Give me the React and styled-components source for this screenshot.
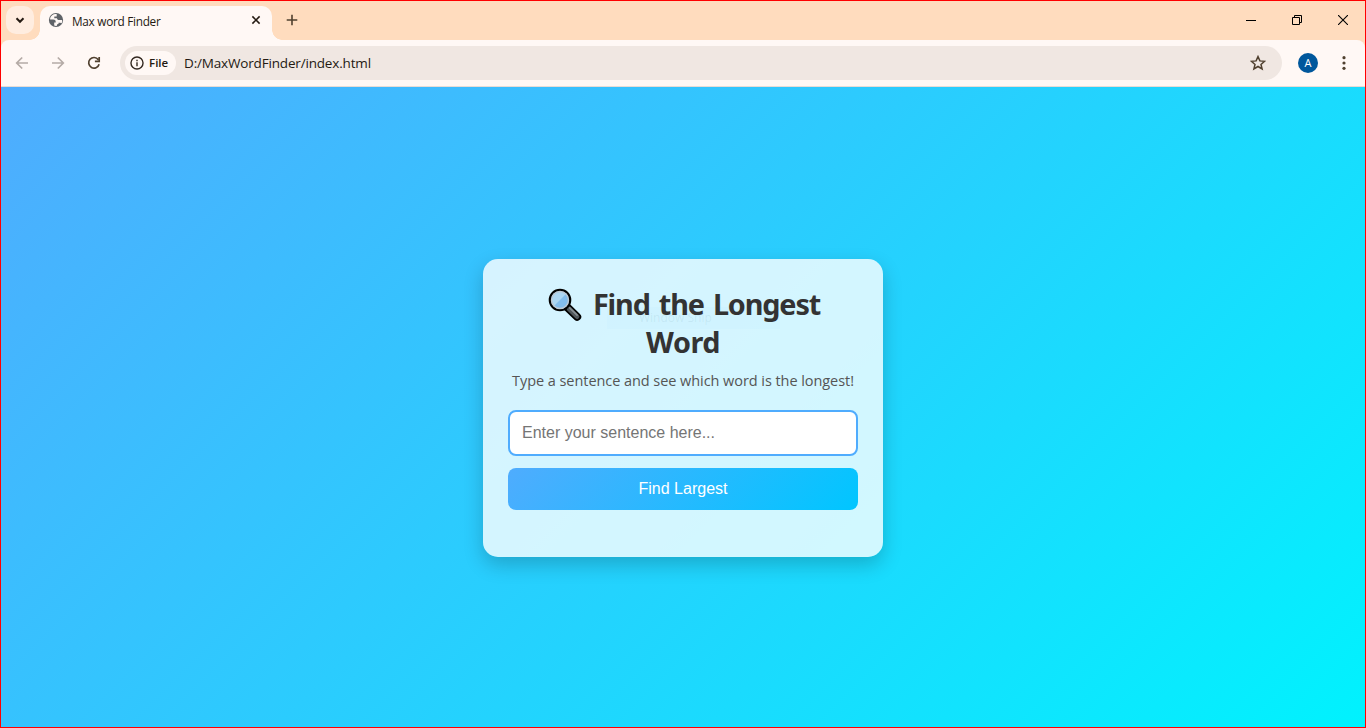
import React from 'react';
import styled, { createGlobalStyle } from 'styled-components';

const GlobalStyle = createGlobalStyle`
  * { box-sizing: border-box; }
  body { margin: 0; overflow: hidden; font-family: "Open Sans", "Noto Sans", sans-serif; }
`;

const Window = styled.div`
  width: 1366px;
  height: 728px;
  display: flex;
  flex-direction: column;
  border: 1px solid #ff0000;
  background: #ffdcbe;
`;

const TabStrip = styled.div`
  height: 39px;
  flex: none;
  display: flex;
  padding: 5px 0 0 5px;
`;

const TabSearch = styled.div`
  width: 28px;
  height: 28px;
  border-radius: 10px;
  background: #ffede0;
  display: flex;
  align-items: center;
  justify-content: center;
`;

const Tab = styled.div`
  position: relative;
  width: 232px;
  height: 34px;
  margin-left: 6px;
  padding: 0 11px 6px 8px;
  display: flex;
  align-items: center;
  border-radius: 10px 10px 0 0;
  background: #fff8f5;
  &::before, &::after {
    content: "";
    position: absolute;
    bottom: 0;
    width: 10px;
    height: 10px;
  }
  &::before { left: -10px; background: radial-gradient(circle at 0 0, transparent 9.5px, #fff8f5 10px); }
  &::after { right: -10px; background: radial-gradient(circle at 100% 0, transparent 9.5px, #fff8f5 10px); }
`;

const Label = styled.span`
  white-space: nowrap;
  color: ${(p) => p.$color || '#241a12'};
  font-size: ${(p) => p.$size}px;
  font-weight: ${(p) => p.$weight || 400};
  letter-spacing: ${(p) => p.$spacing || 0}px;
  line-height: 18px;
`;

const TabTitle = styled(Label)`
  flex: 1;
  margin-left: 8px;
  padding-top: 1px;
`;

const NewTab = styled.div`
  width: 28px;
  height: 28px;
  margin-left: 6px;
  display: flex;
  align-items: center;
  justify-content: center;
`;

const WindowControls = styled.div`
  display: flex;
  margin: -5px -1px 0 auto;
  height: 38px;
`;

const Control = styled.div`
  width: 46px;
  display: flex;
  align-items: center;
  justify-content: center;
`;

const Toolbar = styled.div`
  height: 47px;
  flex: none;
  display: flex;
  align-items: center;
  padding: 0 13px 1px;
  border-bottom: 1px solid #e8dcd5;
  border-radius: 8px 8px 0 0;
  background: #fff8f5;
`;

const NavButton = styled.div`
  width: 16px;
  height: 16px;
  margin-right: 20px;
  display: flex;
`;

const AddressBar = styled.div`
  width: 1162px;
  height: 34px;
  margin-left: -2px;
  padding: 0 16px 0 5px;
  display: flex;
  align-items: center;
  border-radius: 17px;
  background: #f0e7e2;
`;

const FileChip = styled.div`
  width: 51px;
  height: 24px;
  padding-left: 5px;
  display: flex;
  align-items: center;
  gap: 5px;
  border-radius: 12px;
  background: #fff8f5;
`;

const Url = styled(Label)`
  flex: 1;
  margin-left: 8px;
`;

const Avatar = styled.div`
  width: 20px;
  height: 20px;
  margin: 0 18px 0 16px;
  display: flex;
  align-items: center;
  justify-content: center;
  border-radius: 50%;
  background: #00579c;
`;

const Page = styled.main`
  flex: 1;
  display: flex;
  align-items: center;
  justify-content: center;
  padding-top: 1px;
  background: linear-gradient(135deg, #4facfe, #00f2fe);
`;

const Card = styled.section`
  position: relative;
  width: 400px;
  height: 298px;
  padding: 26px 25px 24px;
  border-radius: 15px;
  background: rgba(255, 255, 255, 0.8);
  box-shadow: 0 8px 20px rgba(0, 0, 0, 0.2);
  text-align: center;
`;

const Title = styled.h1`
  position: relative;
  margin: 0 0 9px;
  color: #333;
  font-family: "Noto Sans", "Open Sans", sans-serif;
  font-size: 28.8px;
  font-weight: 700;
  line-height: 38px;
  letter-spacing: -0.5px;
  svg { vertical-align: -7px; margin: 0 11px 0 2px; }
`;

const TitleLead = styled.span`
  letter-spacing: -1.15px;
  word-spacing: 2.8px;
`;

const Subtitle = styled.p`
  margin: 0 0 19px;
  color: #555;
  font-size: 14.5px;
  letter-spacing: -0.06px;
  line-height: 21px;
  white-space: nowrap;
`;

const SentenceInput = styled.input`
  display: block;
  width: 100%;
  height: 46px;
  padding: 12px;
  border: 2px solid #4facfe;
  border-radius: 8px;
  outline: none;
  background: #fff;
  font: 16px "Liberation Sans", sans-serif;
  &::placeholder { color: #757575; }
`;

const FindButton = styled.button`
  display: block;
  width: 100%;
  height: 42px;
  margin-top: 12px;
  border: 0;
  border-radius: 8px;
  background: linear-gradient(135deg, #4facfe, #00c6ff);
  color: #fff;
  font: 16px "Liberation Sans", sans-serif;
`;

const SnipHint = styled.div`
  position: absolute;
  left: 124px;
  top: 48px;
  width: 173px;
  height: 22px;
  display: flex;
  align-items: center;
  padding-left: 32px;
  background: rgba(195, 238, 255, 0.22);
  color: rgba(70, 120, 140, 0.1);
  font-size: 12px;
`;

const Globe = () => (
  <svg width="16" height="16" viewBox="0 0 16 16">
    <circle cx="8" cy="8" r="7.1" fill="#5f6368" />
    <path d="M8.7 2.1C5.8 1.5 2.9 3.3 2.2 6.1l-.1 1.4h3.1c1.7 0 2.5.9 2.5 2.2v.8H6.2v3.1c.8.3 1.9.4 2.8.2v-1.5c1.3 0 1.6-.6 1.6-1.6h1.5c.7 0 1.2.2 1.5.5.5-.9.7-2.1.5-3.2H11c-1.2 0-2-.7-2-1.8H6.3V4.5h2.4z" fill="#fff8f5" />
  </svg>
);

const Glyph = ({ size = 16, color = '#50402f', width = 1.7, d, children }) => (
  <svg width={size} height={size} viewBox="0 0 16 16" fill="none" stroke={color} strokeWidth={width}>
    {d && <path d={d} />}
    {children}
  </svg>
);

const Magnifier = () => (
  <svg width="34" height="34" viewBox="0 0 34 34">
    <path d="M19.5 19.5l9.7 9.3" stroke="#000" strokeWidth="8" strokeLinecap="round" />
    <path d="M17 17l5 5" stroke="#000" strokeWidth="4.5" />
    <path d="M18 18l4 4" stroke="#999fa3" strokeWidth="2" />
    <path d="M21 20.8l8 7.8" stroke="#50575b" strokeWidth="4.8" strokeLinecap="round" />
    <path d="M21.6 19.8l7.5 7.3" stroke="#858c90" strokeWidth="1.7" strokeLinecap="round" />
    <circle cx="12" cy="12" r="10.2" fill="#83bdec" stroke="#000" strokeWidth="2.2" />
    <path d="M5.8 18.2A8.8 8.8 0 0 1 18.2 5.8z" fill="#acd6f2" />
    <circle cx="12" cy="12" r="8.5" fill="none" stroke="#bec8d2" strokeWidth="1.4" />
  </svg>
);

export default function App() {
  return (
    <>
      <GlobalStyle />
      <Window>
        <TabStrip>
          <TabSearch><Glyph color="#241a12" width={2} d="M4.5 6.3L8 9.8l3.5-3.5" /></TabSearch>
          <Tab>
            <Globe />
            <TabTitle $size={11.8} $spacing={-0.28}>Max word Finder</TabTitle>
            <Glyph size={10} color="#241a12" width={2.5} d="M2.2 2.2l11.6 11.6M13.8 2.2L2.2 13.8" />
          </Tab>
          <NewTab><Glyph width={1.6} d="M8 2.7v10.6M2.7 8h10.6" /></NewTab>
          <WindowControls>
            <Control>
              <svg width="10" height="10" shapeRendering="crispEdges"><path d="M0 5.5h10" stroke="#000" /></svg>
            </Control>
            <Control>
              <svg width="10" height="10" fill="none" stroke="#000"><path d="M.5 2.5h7v7h-7zM2.5 2.5v-2h7v7h-2" /></svg>
            </Control>
            <Control>
              <svg width="10" height="10" stroke="#000" strokeWidth="1.1"><path d="M0 0l10 10M10 0L0 10" /></svg>
            </Control>
          </WindowControls>
        </TabStrip>
        <Toolbar>
          <NavButton><Glyph color="#b5aba6" d="M14 8H3M8.2 2.5L2.7 8l5.5 5.5" /></NavButton>
          <NavButton><Glyph color="#b5aba6" d="M2 8h11M7.8 2.5L13.3 8l-5.5 5.5" /></NavButton>
          <NavButton><Glyph width={1.7} d="M12.3 4.7A5.3 5.3 0 1 0 13.1 9.2M13.2 2v4.3H8.9" /></NavButton>
          <AddressBar>
            <FileChip>
              <Glyph size={14} color="#332820" width={1.6}>
                <circle cx="8" cy="8" r="6.9" />
                <path d="M8 7v4.7M8 4.2v1.7" />
              </Glyph>
              <Label $size={11.5} $weight={600}>File</Label>
            </FileChip>
            <Url $size={13.5} $spacing={-0.17}>D:/MaxWordFinder/index.html</Url>
            <Glyph width={1.5} d="M8 1.6l1.9 4.3 4.7.4-3.6 3.1 1.1 4.6L8 11.5 3.9 14 5 9.4 1.4 6.3l4.7-.4z" />
          </AddressBar>
          <Avatar><Label $size={11} $color="#fff">A</Label></Avatar>
          <svg width="16" height="16" fill="#50402f">
            <circle cx="8" cy="2.7" r="1.6" /><circle cx="8" cy="8" r="1.6" /><circle cx="8" cy="13.3" r="1.6" />
          </svg>
        </Toolbar>
        <Page>
          <Card>
            <SnipHint>Window Snip</SnipHint>
            <Title><Magnifier /><TitleLead>Find the Longest</TitleLead> Word</Title>
            <Subtitle>Type a sentence and see which word is the longest!</Subtitle>
            <SentenceInput placeholder="Enter your sentence here..." />
            <FindButton>Find Largest</FindButton>
          </Card>
        </Page>
      </Window>
    </>
  );
}
